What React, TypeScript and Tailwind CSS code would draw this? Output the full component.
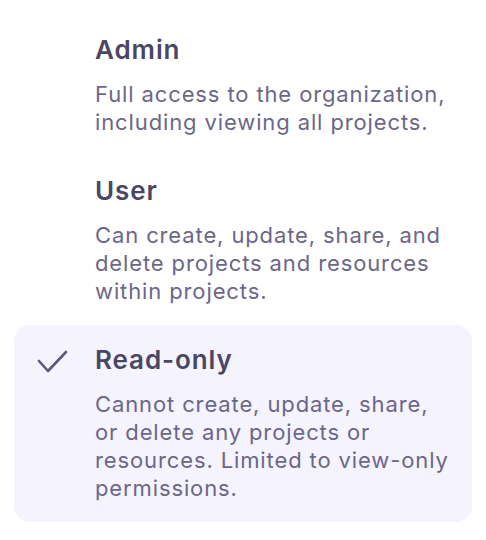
import React from "react";

type Role = { title: string; desc: string; selected?: boolean };

const roles: Role[] = [
  { title: "Admin", desc: "Full access to the organization, including viewing all projects." },
  { title: "User", desc: "Can create, update, share, and delete projects and resources within projects." },
  {
    title: "Read-only",
    desc: "Cannot create, update, share, or delete any projects or resources. Limited to view-only permissions.",
    selected: true,
  },
];

function CheckMark() {
  return (
    <svg width="33" height="26" viewBox="0 0 33 26" fill="none" className="mt-[5px] -ml-[2px]">
      <polyline
        points="3,12 12,22 30,3"
        stroke="#5c5878"
        strokeWidth="2.6"
        strokeLinecap="round"
        strokeLinejoin="round"
      />
    </svg>
  );
}

export default function App() {
  return (
    <div
      className="w-[486px] h-[540px] bg-white pt-[15px] px-[14px] overflow-hidden"
      style={{ fontFamily: "Inter, 'Noto Sans', sans-serif" }}
    >
      <div className="flex flex-col">
        {roles.map((r) => (
          <div
            key={r.title}
            className={`flex pl-6 pt-[19px] pb-[20px] rounded-2xl ${r.selected ? "bg-[#f5f3fe]" : ""}`}
          >
            <div className="w-[57px] shrink-0">{r.selected ? <CheckMark /> : null}</div>
            <div className="w-[360px]">
              <div className="text-[26px] leading-8 font-semibold tracking-[0.035em] text-[#4a4763]">{r.title}</div>
              <div className="mt-[14px] text-[22px] leading-7 tracking-[0.04em] text-[#6b6788]">{r.desc}</div>
            </div>
          </div>
        ))}
      </div>
    </div>
  );
}
